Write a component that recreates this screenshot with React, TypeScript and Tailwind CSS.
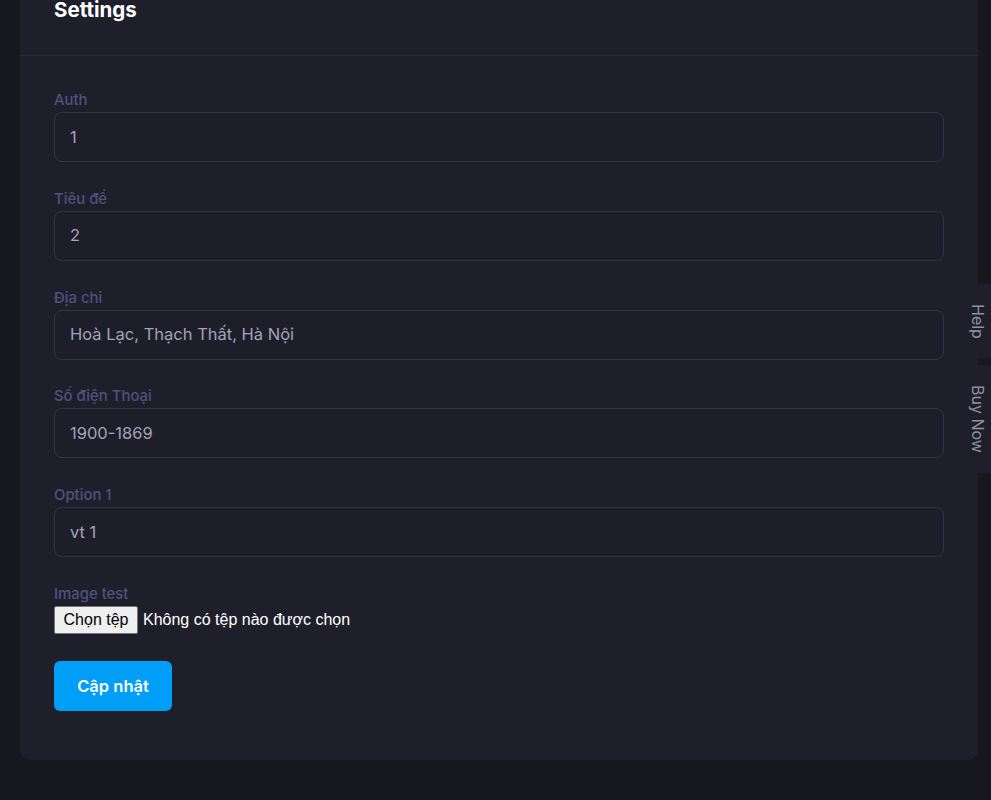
import React from "react";

const fields = [
  { label: "Auth", value: "1" },
  { label: "Tiêu đề", value: "2" },
  { label: "Địa chỉ", value: "Hoà Lạc, Thạch Thất, Hà Nội" },
  { label: "Số điện Thoại", value: "1900-1869" },
  { label: "Option 1", value: "vt 1" },
];

export default function App() {
  return (
    <div
      className="relative min-h-[800px] overflow-hidden bg-[#17171f] pl-5 pr-[13px]"
      style={{ fontFamily: "Inter, 'Noto Sans', sans-serif" }}
    >
      <div className="-mt-9 rounded-b-[10px] bg-[#1f1f2c]">
        <div className="border-b border-[#2a2a3b] px-[34px] pb-[31px] pt-8">
          <h1 className="text-[20.5px] font-bold leading-7 text-white">Settings</h1>
        </div>
        <div className="px-[34px] pb-[49px] pt-[34px]">
          {fields.map((f) => (
            <div key={f.label} className="mb-[26.8px]">
              <div className="mb-0.5 text-[14.9px] font-medium leading-5 text-[#51517a]">{f.label}</div>
              <div className="flex h-[50px] items-center rounded-lg border border-[#33334a] bg-[#1e1e2b] px-[15px] text-[16.5px] text-[#a3a3b8]">
                {f.value}
              </div>
            </div>
          ))}
          <div className="mb-[27px]">
            <div className="mb-0.5 text-[14.9px] font-medium leading-5 text-[#51517a]">Image test</div>
            <div
              className="flex items-center text-base text-white"
              style={{ fontFamily: "'Liberation Sans', Arial, sans-serif" }}
            >
              <span className="flex h-[28px] w-[84px] items-center justify-center rounded-[2px] border border-[#767676] bg-[#efefef] text-[#000]">
                Chọn tệp
              </span>
              <span className="ml-[5px]">Không có tệp nào được chọn</span>
            </div>
          </div>
          <button className="h-[50px] w-[118px] rounded-md bg-[#009ef7] text-[16.5px] font-semibold text-white">
            Cập nhật
          </button>
        </div>
      </div>

      <div className="absolute right-0 top-[284px] flex h-[74px] w-[26px] items-center justify-center rounded-l-md bg-[#1f1f2c]">
        <span className="text-base text-[#9090a2]" style={{ writingMode: "vertical-rl" }}>
          Help
        </span>
      </div>
      <div className="absolute right-0 top-[365px] flex h-[108px] w-[26px] items-center justify-center rounded-l-md bg-[#1f1f2c]">
        <span className="text-base text-[#9090a2]" style={{ writingMode: "vertical-rl" }}>
          Buy Now
        </span>
      </div>
    </div>
  );
}
